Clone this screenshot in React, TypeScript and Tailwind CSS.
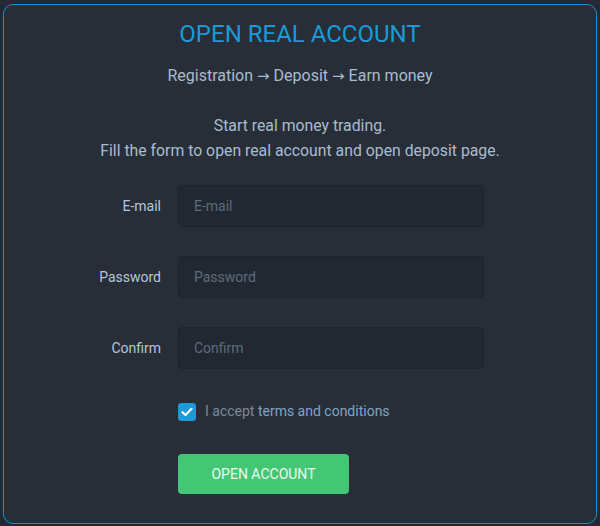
import { useState } from "react";

const fields = [
  { label: "E-mail", type: "email", placeholder: "E-mail" },
  { label: "Password", type: "password", placeholder: "Password" },
  { label: "Confirm", type: "password", placeholder: "Confirm" },
];

const Arrow = () => <span className="font-['DejaVu_Sans',sans-serif] text-[15px]">→</span>;

const App = () => {
  const [accepted, setAccepted] = useState(true);

  return (
    <div className="w-[600px] h-[526px] bg-[#232a33] pt-[4px] pl-[3px] font-['Roboto',sans-serif] overflow-hidden">
      <div className="w-[594px] h-[520px] rounded-[10px] border border-[#1591cf] bg-[#272e38] flex flex-col items-center pt-[15px]">
        <h1 className="text-[24px] leading-[28px] text-[#1a9ad6]">OPEN REAL ACCOUNT</h1>

        <p className="mt-[18px] text-[16px] leading-[20px] text-[#a9bccf]">
          Registration <Arrow /> Deposit <Arrow /> Earn money
        </p>

        <div className="mt-[27px] text-[15.8px] leading-[25px] text-[#a9bccf] text-center">
          <p>Start real money trading.</p>
          <p>Fill the form to open real account and open deposit page.</p>
        </div>

        <form className="self-stretch mt-[22px] flex flex-col gap-[29px]">
          {fields.map((f) => (
            <div key={f.label} className="flex items-center">
              <label className="w-[174px] pr-[17px] text-right text-[14px] text-[#b5c6d8]">
                {f.label}
              </label>
              <input
                type={f.type}
                placeholder={f.placeholder}
                className="w-[306px] h-[42px] rounded-[4px] border border-[#1e242c] bg-[#222831] px-[15px] text-[14px] text-[#c9d6e3] placeholder-[#5d6b7d] outline-none"
              />
            </div>
          ))}

          <div className="flex items-center ml-[174px] mt-[3px]">
            <button
              type="button"
              onClick={() => setAccepted(!accepted)}
              className={
                accepted
                  ? "w-[18px] h-[18px] rounded-[3px] bg-[#1a9ad6] flex items-center justify-center"
                  : "w-[18px] h-[18px] rounded-[3px] border border-[#5d6b7d]"
              }
            >
              {accepted && (
                <svg width="12" height="10" viewBox="0 0 12 10" fill="none">
                  <path d="M1.5 5.2L4.5 8L10.5 1.8" stroke="#fff" strokeWidth="2.2" strokeLinecap="round" strokeLinejoin="round" />
                </svg>
              )}
            </button>
            <span className="ml-[9px] text-[14px] text-[#7d8a99]">
              I accept <a className="text-[#7ea5c8]">terms and conditions</a>
            </span>
          </div>

          <button
            type="submit"
            className="ml-[174px] mt-[3px] w-[171px] h-[40px] rounded-[4px] bg-[#44c774] text-[14px] text-[#ecf8f0]"
          >
            OPEN ACCOUNT
          </button>
        </form>
      </div>
    </div>
  );
};

export default App;
